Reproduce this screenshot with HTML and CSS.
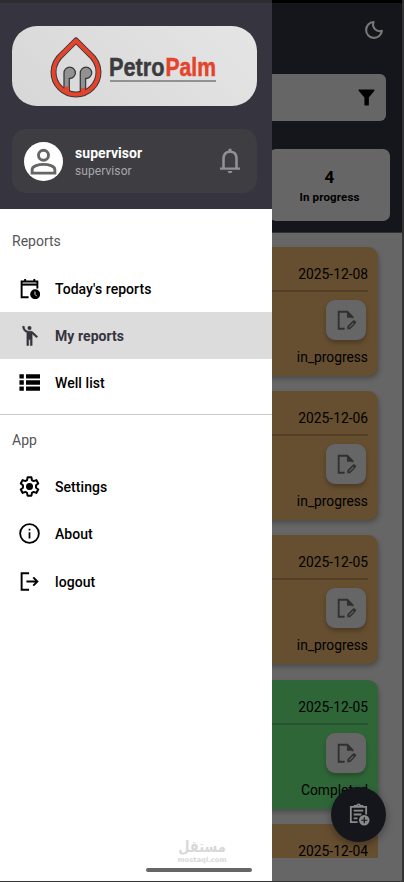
FILE: index.html
```html
<!DOCTYPE html>
<html lang="en">
<head>
<meta charset="utf-8">
<title>PetroPalm</title>
<link rel="stylesheet" href="styles.css">
</head>
<body>
<svg class="defs" width="0" height="0">
  <symbol id="edit-doc" viewBox="0 0 24 24">
    <path fill="none" stroke="currentColor" stroke-width="2" d="M10.500 21.500H4V3h9.500L19 8.500V10"/>
    <path d="M13 2l7.500 7.500H13z" fill="currentColor"/>
    <path d="M13.500 22v-3.200l6.200-6.200q1-.9 2 0l1 1q.9 1 0 2L16.500 22zm1.900-1.700h.6l4.500-4.500-.8-.8-4.300 4.400z" fill="currentColor" fill-rule="evenodd"/>
  </symbol>
</svg>
<div class="screen">
  <main class="page">
    <header class="top">
      <div class="bar">
        <svg class="moon" viewBox="0 0 24 24"><path d="M11.500 2.500A9.500 9.500 0 1 0 21.500 13 8 8 0 0 1 11.500 2.500z" fill="none" stroke="currentColor" stroke-width="2.500" stroke-linejoin="round"/></svg>
      </div>
      <div class="search">
        <svg class="funnel" viewBox="0 0 18 18"><path d="M1 .5h16q.8.6.3 1.300L11.500 9v8q-.3.6-.8.6H7.600q-.6 0-.8-.6V9L.7 1.800Q.2 1 1 .5z"/></svg>
      </div>
      <div class="stat"><b>4</b><span>In progress</span></div>
    </header>
    <section class="list">
      <article class="card"><time>2025-12-08</time><span class="edit"><svg><use href="#edit-doc"/></svg></span><p>in_progress</p></article>
      <article class="card"><time>2025-12-06</time><span class="edit"><svg><use href="#edit-doc"/></svg></span><p>in_progress</p></article>
      <article class="card"><time>2025-12-05</time><span class="edit"><svg><use href="#edit-doc"/></svg></span><p>in_progress</p></article>
      <article class="card done"><time>2025-12-05</time><span class="edit"><svg><use href="#edit-doc"/></svg></span><p>Completed</p></article>
      <article class="card"><time>2025-12-04</time></article>
    </section>
    <div class="fab">
      <svg viewBox="0 0 24 24"><path d="M11 20H4V4h16v8M8 5V3h2.500a1.500 1.500 0 0 1 3 0H16v2" fill="none" stroke="currentColor" stroke-width="1.900"/><path d="M7 8h10M7 12h8M7 16h4" stroke="currentColor" stroke-width="1.900"/><circle cx="18" cy="18" r="5.500" fill="currentColor"/><path d="M18 14.800v6.400M14.800 18h6.400" stroke="#15161b" stroke-width="1.300"/></svg>
    </div>
  </main>
  <aside class="drawer">
    <div class="head">
      <div class="logo">
        <svg viewBox="0 0 244 80" width="244" height="80">
          <path d="M64 14.500L76.500 27Q86.500 35.500 86.500 46A22.500 22.500 0 0 1 41.500 46Q41.500 35.500 51.500 27Z" fill="none" stroke="#3c3a3a" stroke-width="6" stroke-linejoin="round"/>
          <path d="M52 66.500V47A5.700 5.700 0 1 1 57.300 52.500V66.500ZM68.300 66.500V47A5.700 5.700 0 1 1 73.600 52.500V66.500Z" fill="#929292" stroke="#3c3a3a" stroke-width="1.300"/>
          <path d="M64 14.500L76.500 27Q86.500 35.500 86.500 46A22.500 22.500 0 0 1 41.500 46Q41.500 35.500 51.500 27Z" fill="none" stroke="#e5432b" stroke-width="4" stroke-linejoin="round"/>
          <path d="M52.600 60l2 1 2.200-1v8l-4.200-2zM69 61.500l2 1 2.100-1v5l-4.100 2z" fill="#e5432b"/>
          <text x="97" y="49.500" class="brand" fill="#3b3b40" stroke="#3b3b40" textLength="55.500" lengthAdjust="spacingAndGlyphs">Petro</text>
          <text x="153.500" y="49.500" class="brand" fill="#e5432b" stroke="#e5432b" textLength="50.500" lengthAdjust="spacingAndGlyphs">Palm</text>
          <path d="M98 55h106" stroke="#929292" stroke-width="2"/>
        </svg>
      </div>
      <div class="user">
        <span class="avatar"><svg viewBox="0 0 28 28"><circle cx="14" cy="7.500" r="5.200" fill="none" stroke="currentColor" stroke-width="3"/><path d="M2.200 26V22.500C2.200 18.500 9 17 14 17s11.800 1.500 11.800 5.500V26z" fill="none" stroke="currentColor" stroke-width="3"/></svg></span>
        <div class="who"><b>supervisor</b><span>supervisor</span></div>
        <svg class="bell" viewBox="0 0 20 26"><path d="M3.500 20.500V10.500C3.500 6 6 3.800 10 3.800S16.500 6 16.500 10.500V20.500" fill="none" stroke="currentColor" stroke-width="2.600"/><path d="M8.300 4V2q0-1.500 1.700-1.500T11.700 2v2zM0 19.500h20v2.300H0zM7.500 23h5Q12 25.300 10 25.300T7.500 23z" fill="currentColor"/></svg>
      </div>
    </div>
    <nav>
      <h2>Reports</h2>
      <a><svg viewBox="0 0 24 24"><path d="M11 22H3V4h18v8M7 4.500V1M17.500 4.500V1" fill="none" stroke="currentColor" stroke-width="2.200"/><path d="M3 7.500h18" stroke="currentColor" stroke-width="2.400"/><circle cx="18.500" cy="18.500" r="5.700" fill="currentColor"/><path d="M18.300 15.500v3.300l2 2" stroke="#fff" fill="none"/></svg><span>Today's reports</span></a>
      <a class="active"><svg viewBox="0 0 24 24"><circle cx="12" cy="3.500" r="2.300"/><path d="M15.900 8.100C15.500 7.700 14.800 7 13.500 7h-2.500C8.200 7 6 4.800 6 1.500H4c0 3.200 2.100 6.300 5 7.200V23.500h2v-7h2v7h2V10.100L20 14.500l1.400-1.400z" stroke="currentColor" stroke-width=".6"/></svg><span>My reports</span></a>
      <a><svg viewBox="0 0 24 24"><path d="M.5 2.500h5v5h-5zM8 2.500h16v5H8zM.5 9.500h5v5h-5zM8 9.500h16v5H8zM.5 16.500h5v5h-5zM8 16.500h16v5H8z"/></svg><span>Well list</span></a>
      <hr>
      <h2 class="app">App</h2>
      <a><svg viewBox="0 0 24 24"><path d="M9.800 1.500h4.400l.6 3.200 1.900 1.100 3.100-1.100L22 8.500l-2.500 2.200v2.600L22 15.500l-2.200 3.800-3.100-1.100-1.900 1.100-.6 3.200H9.800l-.6-3.200-1.900-1.100-3.100 1.100L2 15.500l2.500-2.200v-2.600L2 8.500l2.200-3.800 3.100 1.100 1.900-1.100z" fill="none" stroke="currentColor" stroke-width="2.300" stroke-linejoin="round"/><circle cx="12" cy="12" r="4"/></svg><span>Settings</span></a>
      <a><svg viewBox="0 0 24 24"><circle cx="12" cy="12" r="10.700" fill="none" stroke="currentColor" stroke-width="2.100"/><path d="M11 6.500h2v2.200h-2zM11 10.700h2v7h-2z"/></svg><span>About</span></a>
      <a><svg viewBox="0 0 24 24"><path d="M11.500 2.500H3v19h8.500M8.500 12h12M16.300 7.300L21 12l-4.700 4.700" fill="none" stroke="currentColor" stroke-width="2.200"/></svg><span>logout</span></a>
    </nav>
  </aside>
  <div class="mark"><span lang="ar">مستقل</span><small>mostaql.com</small></div>
  <div class="handle"></div>
</div>
</body>
</html>
```
FILE: styles.css
```css
* { box-sizing: border-box; }
body { margin: 0; background: #333; font-family: Roboto, "Liberation Sans", sans-serif; color: #000; }
.defs { position: absolute; }
.screen { position: relative; width: 404px; height: 882px; overflow: hidden; }
.page { width: 402px; height: 881px; background: #666; overflow: hidden; }

.top { height: 233px; background: #15161b; border-top: 3px solid #000; border-bottom: 1px solid #303134; display: flex; flex-direction: column; align-items: flex-end; }
.bar { height: 71px; padding: 17px 18px 0 0; }
.moon { display: block; width: 20px; height: 20px; color: #777; }
.search { width: 370px; height: 47px; margin-right: 16px; border-radius: 6px; background: #666; display: flex; justify-content: flex-end; align-items: center; padding-right: 11px; }
.funnel { width: 17px; height: 17px; }
.stat { width: 121px; height: 72px; margin: 28px 12px 0 0; border-radius: 7px; background: #666; display: flex; flex-direction: column; align-items: center; padding-top: 18px; }
.stat b { font-size: 17px; line-height: 20px; font-weight: 700; }
.stat span { font-size: 11.5px; line-height: 20px; font-weight: 700; letter-spacing: .15px; }

.list { height: 625px; padding: 14px 24px 0; overflow: hidden; }
.card { height: 129px; margin-bottom: 15.2px; padding: 0 10px; border-radius: 10px; background: #664e30; box-shadow: 1px 3px 5px rgba(0,0,0,.25); display: flex; flex-direction: column; align-items: flex-end; font-size: 13.8px; }
.card.done { background: #2f6638; }
.card time { width: 100%; height: 45px; border-bottom: 2px solid rgba(0,0,0,.17); line-height: 54px; text-align: right; }
.edit { width: 40px; height: 40px; margin: 8px 2px 0 0; flex: none; border-radius: 9px; background: #666; color: #303030; box-shadow: 0 3px 4px rgba(0,0,0,.25); display: flex; align-items: center; justify-content: center; }
.edit svg { width: 22px; height: 22px; }
.card p { margin: 8px 0 0; line-height: 18px; }
.card:last-child { height: 34px; margin: 0; border-radius: 10px 10px 0 0; box-shadow: none; }

.fab { position: absolute; left: 331px; top: 787px; width: 55px; height: 55px; border-radius: 50%; background: #15161b; color: #8a8a8a; box-shadow: 0 3px 8px rgba(0,0,0,.35); display: flex; align-items: center; justify-content: center; }
.fab svg { width: 23px; height: 23px; }

.drawer { position: absolute; left: 0; top: 0; width: 272px; height: 881px; background: #fff; }
.head { height: 209px; padding: 23px 15px 0 12px; background: #35343f; border-top: 3px solid #2b2c2d; }
.logo { height: 80px; border-radius: 25px; background: linear-gradient(45deg, #d7d7d7, #e5e5e5); }
.logo svg { display: block; }
.brand { font: 700 26px "Liberation Sans", sans-serif; stroke-width: .5px; }
.user { height: 64px; margin-top: 23px; padding: 0 17px 0 12px; border-radius: 14px; background: #3e3d41; display: flex; align-items: center; }
.avatar { width: 39px; height: 39px; border-radius: 50%; background: #fff; color: #666; display: flex; align-items: center; justify-content: center; }
.avatar svg { width: 27px; height: 27px; }
.who { flex: 1; padding: 3px 0 0 12px; display: flex; flex-direction: column; }
.who b { color: #fff; font-size: 14px; line-height: 17px; font-weight: 700; letter-spacing: .05px; }
.who span { color: #a7a7a9; font-size: 12px; line-height: 18px; letter-spacing: .08px; }
.bell { width: 20px; height: 26px; color: #919191; }

nav { display: flex; flex-direction: column; }
h2 { margin: 0; height: 55.5px; padding-left: 12px; font-size: 14px; font-weight: 400; line-height: 64px; color: #555; }
nav a { height: 47.3px; padding-left: 19px; display: flex; align-items: center; gap: 15px; font-size: 14px; font-weight: 500; letter-spacing: .06px; }
nav a span { padding-top: 1px; }
nav a svg { width: 21px; height: 21px; fill: currentColor; }
nav .active { background: #dcdcdc; color: #35343f; font-weight: 700; }
hr { width: 100%; height: 1px; margin: 7.5px 0 0; border: 0; background: #ccc; }
h2.app { height: 48px; line-height: 50px; }

.mark { position: absolute; left: 172px; top: 838px; width: 60px; color: #d8d8d8; display: flex; flex-direction: column; align-items: center; }
.mark span { font: 700 13px/17px "DejaVu Sans", sans-serif; transform: scaleY(1.2); }
.mark small { margin-top: 1px; font: 700 6.8px/8px "DejaVu Sans", sans-serif; }
.handle { position: absolute; left: 146px; top: 868px; width: 106px; height: 4px; border-radius: 2px; background: #666; }
```
